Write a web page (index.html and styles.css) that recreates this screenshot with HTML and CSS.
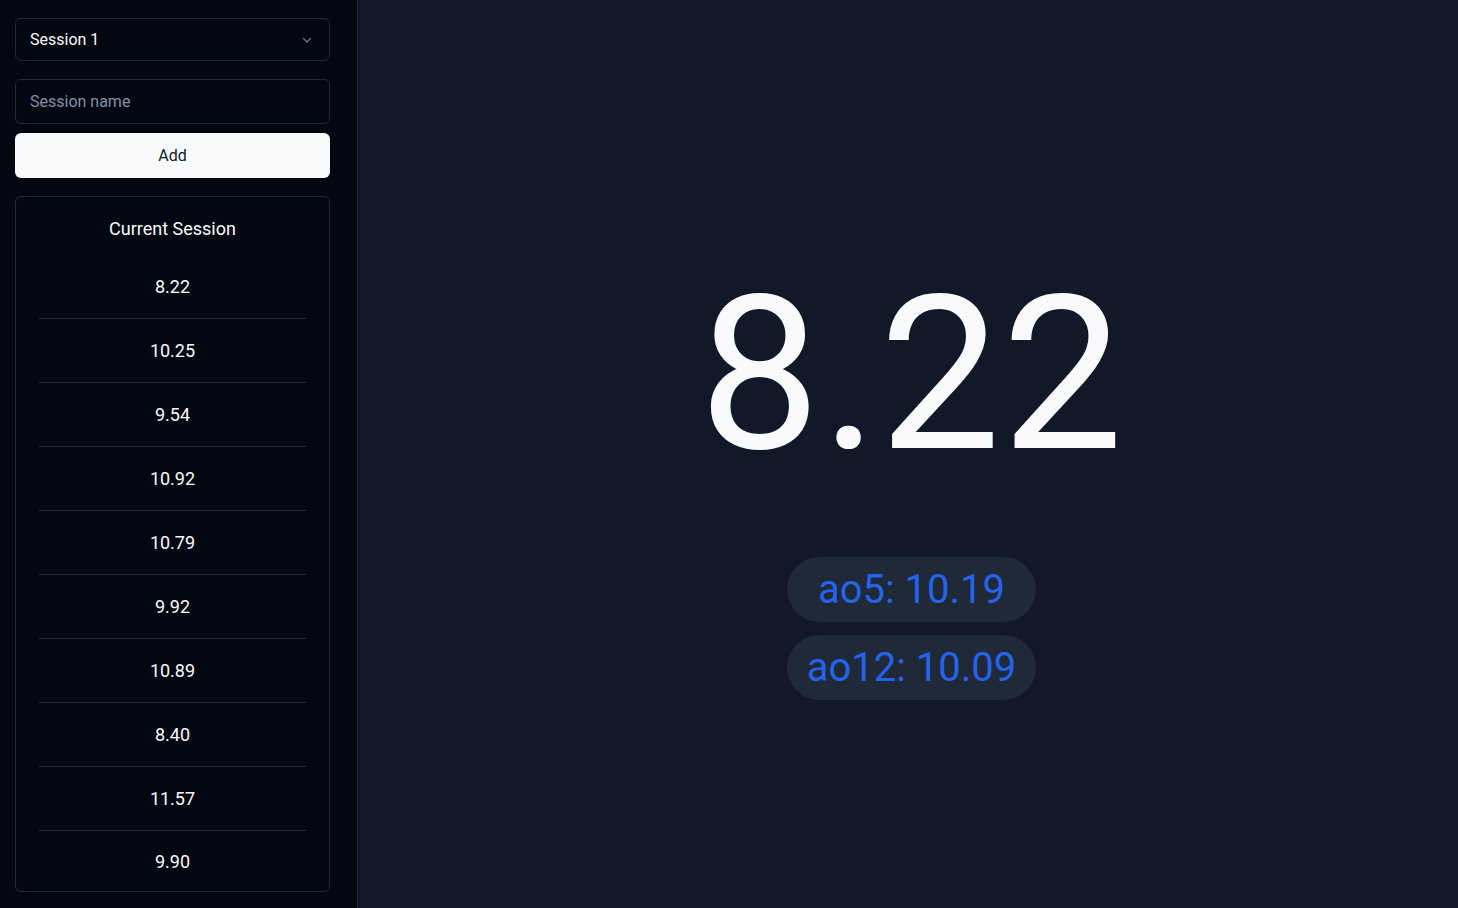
FILE: index.html
```html
<!DOCTYPE html>
<html lang="en">
<head>
<meta charset="utf-8">
<title>Timer</title>
<link rel="stylesheet" href="styles.css">
</head>
<body>
<div class="app">
  <aside class="sidebar">
    <div class="select">
      <span>Session 1</span>
      <svg class="chev" width="12" height="12" viewBox="0 0 12 12"><path d="M2.5 4.5 L6 8 L9.5 4.5" fill="none" stroke="#6b7280" stroke-width="1.4" stroke-linecap="round" stroke-linejoin="round"/></svg>
    </div>
    <div class="input">Session name</div>
    <button class="add">Add</button>
    <section class="card">
      <h2 class="card-title">Current Session</h2>
      <ul class="times">
        <li>8.22</li>
        <li>10.25</li>
        <li>9.54</li>
        <li>10.92</li>
        <li class="thick">10.79</li>
        <li>9.92</li>
        <li>10.89</li>
        <li>8.40</li>
        <li>11.57</li>
        <li>9.90</li>
      </ul>
    </section>
  </aside>
  <main class="main">
    <div class="timer">8.22</div>
    <div class="avgs">
      <div class="pill">ao5: 10.19</div>
      <div class="pill">ao12: 10.09</div>
    </div>
  </main>
</div>
</body>
</html>
```
FILE: styles.css
```css
* { box-sizing: border-box; }
html, body { margin: 0; height: 100%; }
body {
  font-family: Roboto, "Liberation Sans", sans-serif;
  background: #111827;
  color: #f9fafb;
}
.app {
  display: flex;
  height: 908px;
}
.sidebar {
  width: 358px;
  flex: none;
  background: #030712;
  border-right: 1px solid #1f2937;
  padding: 18px 27px 0 15px;
  display: flex;
  flex-direction: column;
}
.select {
  height: 43px;
  border: 1px solid #1f2937;
  border-radius: 6px;
  display: flex;
  align-items: center;
  justify-content: space-between;
  padding: 0 16px 0 14px;
  font-size: 16px;
  color: #f9fafb;
}
.chev { display: block; }
.input {
  margin-top: 18px;
  height: 45px;
  border: 1px solid #1f2937;
  border-radius: 6px;
  display: flex;
  align-items: center;
  padding: 0 14px;
  font-size: 16px;
  color: #8391a7;
}
.add {
  margin-top: 9px;
  height: 45px;
  border: 0;
  border-radius: 6px;
  background: #f9fafb;
  color: #111827;
  font-family: inherit;
  font-size: 16px;
}
.card {
  margin-top: 18px;
  border: 1px solid #1f2937;
  border-radius: 6px;
  padding: 20px 23px 0;
  height: 696px;
}
.card-title {
  margin: 0 0 14px;
  text-align: center;
  font-size: 18px;
  font-weight: 400;
  line-height: 24px;
}
.times {
  list-style: none;
  margin: 0;
  padding: 0;
}
.times li {
  height: 64px;
  display: flex;
  align-items: center;
  justify-content: center;
  font-size: 18px;
  border-bottom: 1px solid #1f2937;
}
.times li.thick { border-top: 1px solid #1f2937; margin-top: -1px; height: 65px; }
.times li:last-child { border-bottom: 0; height: 61px; }
.main {
  flex: 1;
  display: flex;
  flex-direction: column;
  align-items: center;
  justify-content: center;
  padding-top: 59px;
  padding-left: 7px;
}
.timer {
  font-size: 216px;
  font-weight: 400;
  line-height: 1;
  letter-spacing: 1px;
  color: #f9fafb;
}
.avgs {
  margin-top: 74px;
  display: flex;
  flex-direction: column;
  gap: 13px;
}
.pill {
  background: #1f2937;
  color: #2563eb;
  font-size: 40px;
  line-height: 65px;
  height: 65px;
  padding: 0 20px;
  border-radius: 33px;
  text-align: center;
}
```
